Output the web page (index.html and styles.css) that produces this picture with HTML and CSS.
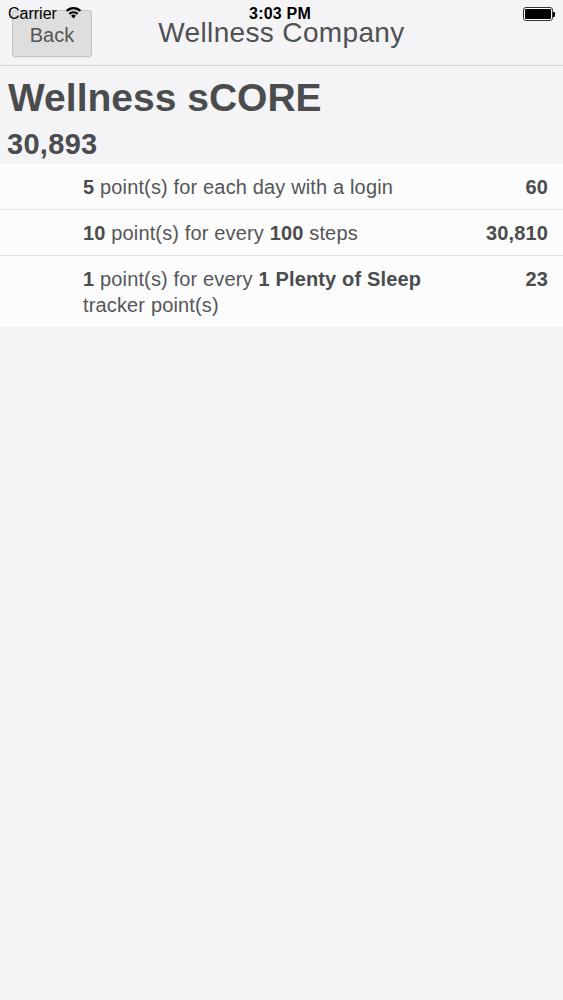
FILE: index.html
```html
<!DOCTYPE html>
<html lang="en">
<head>
<meta charset="utf-8">
<title>Wellness sCORE</title>
<link rel="stylesheet" href="styles.css">
</head>
<body>
<div class="screen">
  <div class="statusbar">
    <div class="status-left">
      <span class="carrier">Carrier</span>
      <svg class="wifi" width="17" height="13" viewBox="0 0 16 12">
        <path d="M8 11.6 L5.7 9.1 A3.3 3.3 0 0 1 10.3 9.1 Z" fill="#000"/>
        <path d="M4.1 7.3 A5.6 5.6 0 0 1 11.9 7.3" fill="none" stroke="#000" stroke-width="2"/>
        <path d="M1.5 4.6 A9.2 9.2 0 0 1 14.5 4.6" fill="none" stroke="#000" stroke-width="2"/>
      </svg>
    </div>
    <span class="time">3:03 PM</span>
    <div class="status-right">
      <span class="battery"><span class="battery-fill"></span></span><span class="battery-nub"></span>
    </div>
  </div>

  <header class="navbar">
    <button class="back">Back</button>
    <h1 class="title">Wellness Company</h1>
    <span class="spacer"></span>
  </header>

  <main class="content">
    <h2 class="heading">Wellness sCORE</h2>
    <div class="total">30,893</div>
    <ul class="rules">
      <li class="rule">
        <span class="desc"><b>5</b> point(s) for each day with a login</span>
        <span class="pts">60</span>
      </li>
      <li class="rule">
        <span class="desc"><b>10</b> point(s) for every <b>100</b> steps</span>
        <span class="pts">30,810</span>
      </li>
      <li class="rule">
        <span class="desc"><b>1</b> point(s) for every <b>1 Plenty of Sleep</b> tracker point(s)</span>
        <span class="pts">23</span>
      </li>
    </ul>
  </main>
</div>
</body>
</html>
```

FILE: styles.css
```css
* { box-sizing: border-box; }

html, body {
  margin: 0;
  padding: 0;
  background: #f4f4f6;
}

body {
  font-family: "Liberation Sans", Arial, Helvetica, sans-serif;
  color: #555;
}

.screen {
  position: relative;
  width: 563px;
  min-height: 1000px;
  background: #f4f4f6;
}

/* status bar overlays the navbar */
.statusbar {
  position: absolute;
  top: 0;
  left: 0;
  right: 0;
  height: 22px;
  display: grid;
  grid-template-columns: 1fr auto 1fr;
  align-items: center;
  padding: 0 8px;
  z-index: 2;
  color: #000;
}

.status-left {
  display: flex;
  align-items: center;
  gap: 8px;
  margin-top: 6px;
}

.carrier {
  font-size: 16px;
  line-height: 14px;
}

.wifi {
  margin-top: -4px;
}

.time {
  font-size: 16px;
  font-weight: bold;
  line-height: 12px;
  margin-top: 6px;
  margin-left: -3px;
  letter-spacing: 0.2px;
}

.status-right {
  display: flex;
  align-items: center;
  justify-content: flex-end;
  margin-top: 6px;
}

.battery {
  display: block;
  width: 30px;
  height: 14px;
  border: 1px solid #333;
  border-radius: 3px;
  padding: 1px;
  background: #fff;
}

.battery-fill {
  display: block;
  width: 100%;
  height: 100%;
  background: #000;
  border-radius: 1px;
}

.battery-nub {
  display: block;
  width: 2px;
  height: 5px;
  background: #000;
  border-radius: 0 1px 1px 0;
}

/* navbar */
.navbar {
  display: grid;
  grid-template-columns: 1fr auto 1fr;
  align-items: center;
  height: 66px;
  padding: 10px 12px 8px;
  border-bottom: 1px solid #d6d6d8;
  background: #f4f4f6;
}

.back {
  justify-self: start;
  width: 80px;
  height: 47px;
  padding: 3px 0 0;
  background: #dedede;
  border: 1px solid #c6c6c6;
  border-radius: 3px;
  font-family: inherit;
  font-size: 20px;
  color: #555;
  box-shadow: 0 1px 1px rgba(0,0,0,0.05);
}

.title {
  margin: 0;
  margin-top: -1px;
  font-size: 28px;
  font-weight: normal;
  line-height: 24px;
  letter-spacing: 0.35px;
  color: #4f5152;
  white-space: nowrap;
}

.spacer { display: block; }

/* content */
.content {
  padding-top: 10px;
}

.heading {
  margin: 0 0 0 8px;
  font-size: 39px;
  line-height: 44px;
  font-weight: bold;
  color: #4a4c4d;
}

.total {
  margin: 8px 0 0 7px;
  font-size: 29px;
  line-height: 32px;
  font-weight: bold;
  letter-spacing: 0.3px;
  color: #4a4c4d;
}

.rules {
  list-style: none;
  margin: 4px 0 0;
  padding: 0;
  background: #fcfcfd;
}

.rule {
  display: flex;
  align-items: flex-start;
  justify-content: space-between;
  gap: 20px;
  padding: 10px 15px 9px 83px;
  border-bottom: 1px solid #e4e4e6;
  font-size: 20px;
  line-height: 26px;
  letter-spacing: 0.15px;
  color: #555657;
}

.rule:last-child {
  border-bottom: none;
}

.desc {
  max-width: 350px;
}

.desc b {
  color: #4a4c4d;
}

.pts {
  font-weight: bold;
  color: #4a4c4d;
  white-space: nowrap;
}
```
